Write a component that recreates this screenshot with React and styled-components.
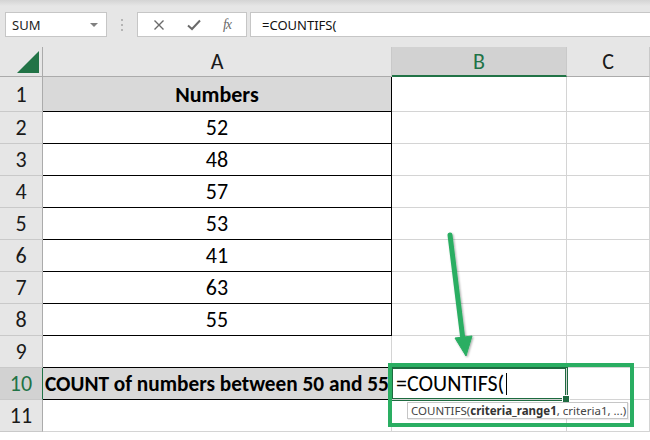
import React from "react";
import styled, { createGlobalStyle, css } from "styled-components";

const GlobalStyle = createGlobalStyle`
    html, body { margin: 0; padding: 0; background: #fff; }
    * { box-sizing: border-box; }
`;

const CELL_FONT = `Carlito, "Liberation Sans Narrow", Lato, sans-serif`;
const UI_FONT = `"Noto Sans", "Open Sans", sans-serif`;
const GREEN = "#217346";

const Page = styled.div`
    position: relative;
    width: 650px;
    height: 440px;
    overflow: hidden;
    background: #fff;
`;

const Toolbar = styled.div`
    display: flex;
    align-items: flex-start;
    height: 47px;
    padding: 12px 0 0 5px;
    background: linear-gradient(#d4d4d4 0, #e6e6e6 6px, #e6e6e6 100%);
`;

const Box = styled.div`
    display: flex;
    align-items: center;
    height: 25px;
    background: #fff;
    border: 1px solid #c6c6c6;
    font-family: ${UI_FONT};
    font-size: 13px;
    color: #222;
`;

const NameBox = styled(Box)`
    width: 102px;
    padding: 0 6px 0 6px;
    justify-content: space-between;
`;

const Caret = styled.span`
    width: 0;
    height: 0;
    border-left: 4px solid transparent;
    border-right: 4px solid transparent;
    border-top: 4px solid #808080;
    margin-right: 2px;
`;

const Grip = styled.div`
    display: flex;
    flex-direction: column;
    gap: 3px;
    width: 2px;
    margin: 7px 14px 0 14px;
    span {
        width: 2px;
        height: 2px;
        background: #b4b4b4;
    }
`;

const ButtonGroup = styled(Box)`
    width: 110px;
    justify-content: space-around;
    padding: 0 4px;
    margin-right: 3px;
`;

const Fx = styled.span`
    font-family: "Liberation Serif", serif;
    font-style: italic;
    font-size: 14px;
    color: #6a6a6a;
    letter-spacing: -1px;
`;

const FormulaBox = styled(Box)`
    flex: 1;
    padding-left: 11px;
    border-right: none;
    font-size: 13px;
    color: #111;
`;

const Sheet = styled.div`
    display: grid;
    grid-template-columns: 43px 349px 175px 1fr;
    grid-template-rows: 30px 35px repeat(10, 32px);
    font-family: ${CELL_FONT};
    font-size: 22px;
    color: #000;
`;

const HeadCell = styled.div`
    display: flex;
    align-items: center;
    justify-content: center;
    background: ${({ $active }) => ($active ? "#d2d2d2" : "#e6e6e6")};
    color: ${({ $active }) => ($active ? GREEN : "#1a1a1a")};
    border-right: 1px solid #c9c9c9;
    border-bottom: ${({ $active }) => ($active ? `2px solid ${GREEN}` : "1px solid #ababab")};
    padding-top: ${({ $active }) => ($active ? "1px" : "0")};
`;

const Corner = styled(HeadCell)`
    justify-content: flex-end;
    align-items: flex-end;
    padding: 0 3px 3px 0;
    border-right: 1px solid #ababab;
`;

const RowHead = styled.div`
    display: flex;
    align-items: center;
    justify-content: center;
    background: ${({ $active }) => ($active ? "#d2d2d2" : "#e6e6e6")};
    color: ${({ $active }) => ($active ? GREEN : "#1a1a1a")};
    border-right: 1px solid ${({ $active }) => ($active ? GREEN : "#ababab")};
    border-bottom: 1px solid #c9c9c9;
`;

const Cell = styled.div`
    position: relative;
    display: flex;
    align-items: center;
    justify-content: ${({ $align }) => $align || "flex-start"};
    padding: 0 2px;
    white-space: nowrap;
    overflow: visible;
    background: ${({ $fill }) => ($fill ? "#d9d9d9" : "#fff")};
    font-weight: ${({ $bold }) => ($bold ? 700 : 400)};
    font-size: ${({ $size }) => $size || "inherit"};
    border-right: 1px solid ${({ $boxed }) => ($boxed ? "#000" : "#d4d4d4")};
    border-bottom: 1px solid ${({ $boxed, $under }) => ($boxed || $under ? "#000" : "#d4d4d4")};
    ${({ $selected }) =>
        $selected &&
        css`
            z-index: 1;
            box-shadow: 0 0 0 1px #1e6b40, inset 0 0 0 1px #1e6b40;
            padding-left: 4px;
            &::after {
                content: "";
                position: absolute;
                right: -4px;
                bottom: -4px;
                width: 6px;
                height: 6px;
                background: #1e6b40;
                border: 1px solid #fff;
            }
        `}
`;

const TextCaret = styled.span`
    display: inline-block;
    width: 1px;
    height: 22px;
    margin-left: 2px;
    background: #000;
`;

const Annotation = styled.div`
    position: absolute;
    left: 388px;
    top: 363px;
    width: 246px;
    height: 64px;
    border: 4px solid #2aae62;
    z-index: 3;
    pointer-events: none;
`;

const Tip = styled.div`
    position: absolute;
    left: 407px;
    top: 402px;
    width: 221px;
    height: 17px;
    display: flex;
    align-items: center;
    padding-left: 3px;
    background: #fff;
    border: 1px solid #c6c6c6;
    box-shadow: 1px 1px 1px rgba(0, 0, 0, 0.08);
    font-family: ${UI_FONT};
    font-size: 11.5px;
    color: #444;
    white-space: nowrap;
    z-index: 2;
    b { font-weight: 700; color: #333; }
`;

const ArrowSvg = styled.svg`
    position: absolute;
    left: 0;
    top: 0;
    z-index: 4;
    pointer-events: none;
`;

const numbers = ["52", "48", "57", "53", "41", "63", "55"];

export default function App() {
    const rows = [];
    rows.push(
        <React.Fragment key="r1">
            <RowHead>1</RowHead>
            <Cell $boxed $fill $bold $align="center">Numbers</Cell>
            <Cell />
            <Cell />
        </React.Fragment>
    );
    numbers.forEach((n, i) => {
        rows.push(
            <React.Fragment key={n + i}>
                <RowHead>{i + 2}</RowHead>
                <Cell $boxed $align="center">{n}</Cell>
                <Cell />
                <Cell />
            </React.Fragment>
        );
    });
    rows.push(
        <React.Fragment key="r9">
            <RowHead>9</RowHead>
            <Cell $under />
            <Cell />
            <Cell />
        </React.Fragment>
    );
    rows.push(
        <React.Fragment key="r10">
            <RowHead $active>10</RowHead>
            <Cell $boxed $fill $bold $size="21.3px">COUNT of numbers between 50 and 55</Cell>
            <Cell $selected>=COUNTIFS(<TextCaret /></Cell>
            <Cell />
        </React.Fragment>
    );
    rows.push(
        <React.Fragment key="r11">
            <RowHead>11</RowHead>
            <Cell />
            <Cell />
            <Cell />
        </React.Fragment>
    );

    return (
        <Page>
            <GlobalStyle />
            <Toolbar>
                <NameBox>
                    SUM
                    <Caret />
                </NameBox>
                <Grip>
                    <span />
                    <span />
                    <span />
                </Grip>
                <ButtonGroup>
                    <svg width="12" height="12" viewBox="0 0 12 12">
                        <path d="M1.5 1.5 L10.5 10.5 M10.5 1.5 L1.5 10.5" stroke="#6a6a6a" strokeWidth="1.4" fill="none" />
                    </svg>
                    <svg width="14" height="12" viewBox="0 0 14 12">
                        <path d="M1 6.5 L5 10 L13 1.5" stroke="#6a6a6a" strokeWidth="2" fill="none" />
                    </svg>
                    <Fx>fx</Fx>
                </ButtonGroup>
                <FormulaBox>=COUNTIFS(</FormulaBox>
            </Toolbar>
            <Sheet>
                <Corner>
                    <svg width="22" height="22" viewBox="0 0 22 22">
                        <polygon points="22,0 22,22 0,22" fill={GREEN} />
                    </svg>
                </Corner>
                <HeadCell>A</HeadCell>
                <HeadCell $active>B</HeadCell>
                <HeadCell>C</HeadCell>
                {rows}
            </Sheet>
            <Annotation />
            <Tip>
                COUNTIFS(<b>criteria_range1</b>, criteria1, ...)
            </Tip>
            <ArrowSvg width="650" height="440" viewBox="0 0 650 440">
                <defs>
                    <filter id="sh" x="-50%" y="-10%" width="200%" height="120%">
                        <feDropShadow dx="1" dy="1" stdDeviation="1.2" floodColor="#000" floodOpacity="0.35" />
                    </filter>
                </defs>
                <g filter="url(#sh)" fill="#2aae62" stroke="#2aae62">
                    <line x1="450" y1="235" x2="463" y2="340" strokeWidth="5" strokeLinecap="round" />
                    <polygon points="455,338 472,336 466,356" strokeWidth="1" strokeLinejoin="round" />
                </g>
            </ArrowSvg>
        </Page>
    );
}
